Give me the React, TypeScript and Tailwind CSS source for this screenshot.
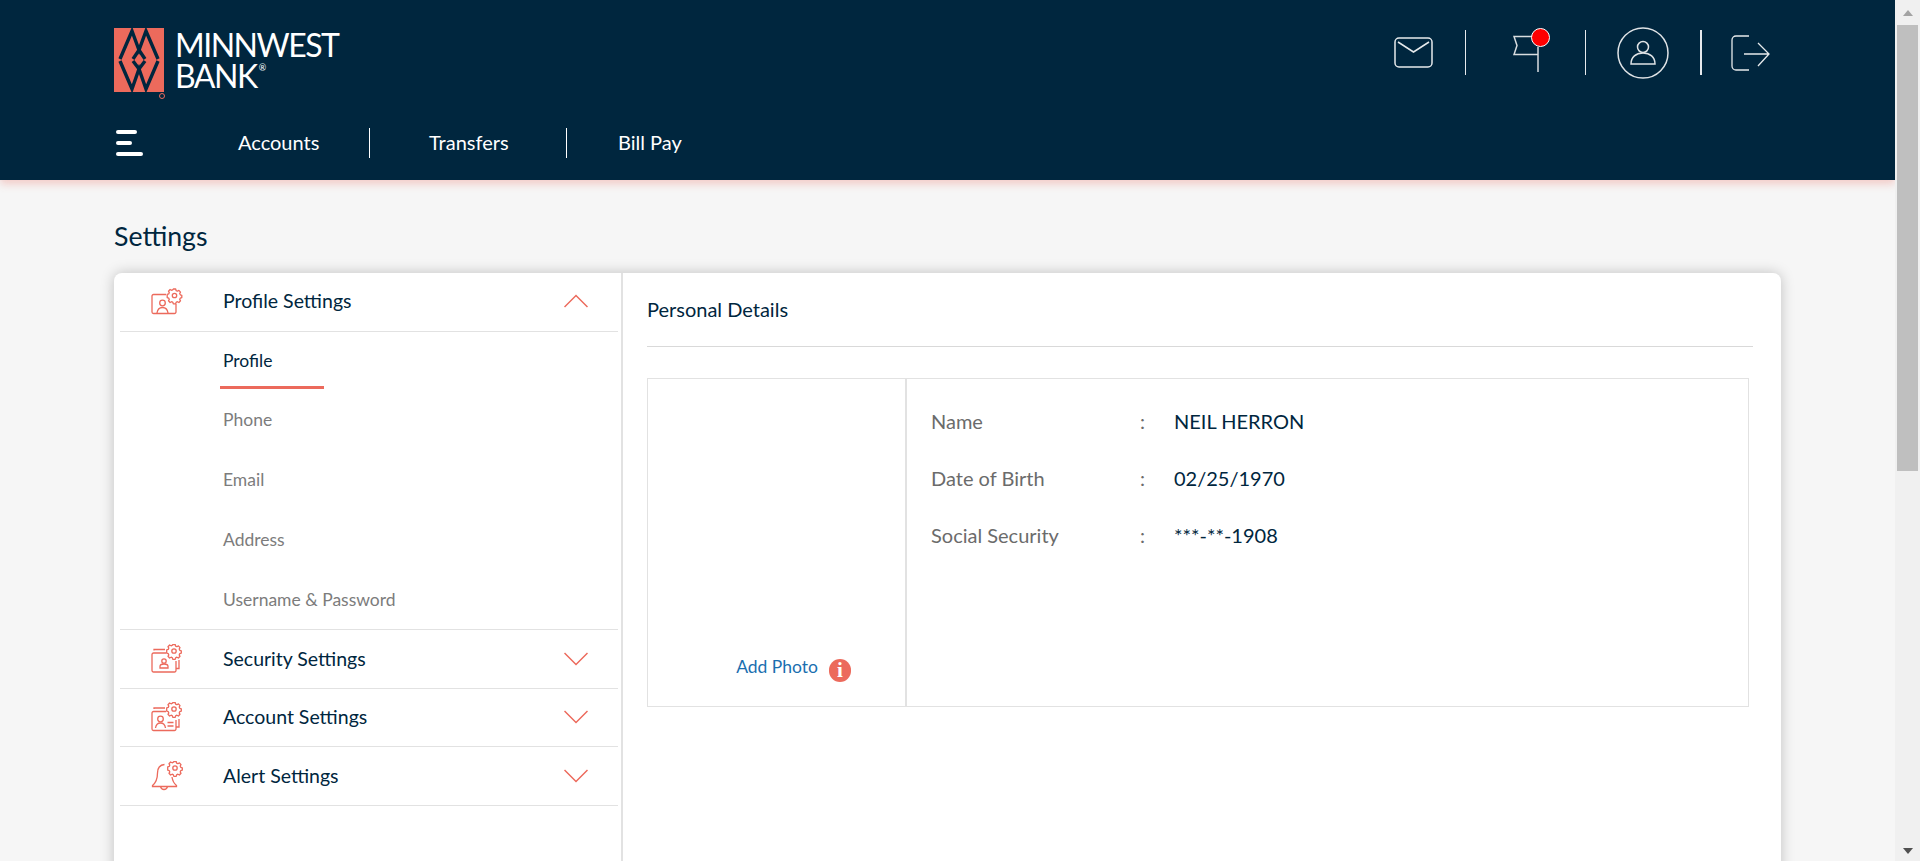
import React from 'react';

const coral = '#ec6a5c';

const GearBadge = ({ x, y }: { x: number; y: number }) => (
  <g transform={`translate(${x} ${y})`}>
    <circle r="2.2" fill="none" stroke={coral} strokeWidth="1.300" />
    <path
      d="M-1.2-6.5h2.4l.4 1.6 1.3.6 1.5-.8 1.6 1.7-.8 1.4.6 1.3 1.5.5v2.3l-1.5.5-.6 1.3.8 1.4-1.6 1.7-1.5-.8-1.3.6-.4 1.6h-2.4l-.4-1.6-1.3-.6-1.5.8-1.6-1.7.8-1.4-.6-1.3-1.5-.5V-1.1l1.5-.5.6-1.3-.8-1.4 1.6-1.7 1.500.8 1.300-.6z"
      fill="none"
      stroke={coral}
      strokeWidth="1.300"
      strokeLinejoin="round"
    />
  </g>
);

const ProfileIcon = () => (
  <svg width="32" height="28" viewBox="0 0 32 28" fill="none" stroke={coral} strokeWidth="1.300">
    <path d="M15 6.500H2.500a1.500 1.500 0 0 0-1.500 1.500v16a1.500 1.500 0 0 0 1.500 1.500h21a1.500 1.500 0 0 0 1.500-1.500v-8" />
    <circle cx="11.500" cy="15" r="2.800" />
    <path d="M6 25c.5-3.500 2.500-5.500 5.500-5.500s5 2 5.500 5.500" />
    <GearBadge x={23.500} y={7.500} />
  </svg>
);

const SecurityIcon = () => (
  <svg width="32" height="30" viewBox="0 0 32 30" fill="none" stroke={coral} strokeWidth="1.300">
    <path d="M3 6.500V5.500h11" />
    <path d="M15 9H2.500A1.500 1.500 0 0 0 1 10.500v16A1.500 1.500 0 0 0 2.500 28h21a1.500 1.500 0 0 0 1.500-1.500V17" />
    <path d="M25 24.500h3V16" />
    <circle cx="13" cy="17" r="2.200" />
    <path d="M9 24v-1.500c0-1.500 1.500-2.500 4-2.500s4 1 4 2.500V24z" />
    <GearBadge x={23} y={7} />
  </svg>
);

const AccountIcon = () => (
  <svg width="32" height="30" viewBox="0 0 32 30" fill="none" stroke={coral} strokeWidth="1.300">
    <path d="M3 7V6h11" />
    <path d="M15 9.500H2.500A1.500 1.500 0 0 0 1 11v16a1.500 1.500 0 0 0 1.500 1.500h21A1.500 1.500 0 0 0 25 27V18" />
    <path d="M25 25h3v-8" />
    <circle cx="9.500" cy="17" r="2.800" />
    <path d="M4.500 26c.5-3.500 2.500-5 5-5s4.500 1.500 5 5" />
    <path d="M16.500 20.500h6M16.500 24h6" />
    <GearBadge x={23} y={7} />
  </svg>
);

const AlertIcon = () => (
  <svg width="32" height="30" viewBox="0 0 32 30" fill="none" stroke={coral} strokeWidth="1.300">
    <path d="M13.500 3.500C8.500 4 6.500 8 6.500 12c0 6-2 10-5 12.500v1h24v-1c-2.500-2-4-5-4.500-8.500" />
    <path d="M9.500 25.500c.5 2 1.800 3 3.500 3s3-1 3.500-3" />
    <GearBadge x={24} y={7} />
  </svg>
);

const Chevron = ({ up }: { up?: boolean }) => (
  <svg width="24" height="14" viewBox="0 0 24 14" fill="none" stroke={coral} strokeWidth="1.500">
    <path d={up ? 'M.5 13 12 1.500 23.500 13' : 'M.5 1 12 12.500 23.500 1'} />
  </svg>
);

const Logo = () => (
  <div className="flex items-start">
    <div className="relative h-[64px] w-[50px] bg-[#ec6a5c]">
      <svg width="50" height="64" viewBox="0 0 50 64" fill="none" stroke="#00263e" strokeWidth="3.400">
        <path d="M6 31 18 3l7 19 7-19 12 28" />
        <path d="M19 31l6-9 6 9" />
        <path d="M6 33l12 28 7-20 7 20 12-28" />
        <path d="M19 33l6 8 6-8" />
      </svg>
      <span className="absolute bottom-[-7px] right-[-1px] h-[6px] w-[6px] rounded-full border border-[#ec6a5c]" />
    </div>
    <div className="ml-[11px] mt-[1px] font-['Lato',sans-serif] text-[32px] font-normal leading-[31px] tracking-[-1.5px] text-white">
      <div>MINNWEST</div>
      <div className="flex items-start">
        BANK<span className="ml-[2px] text-[9px] leading-[16px]">®</span>
      </div>
    </div>
  </div>
);

const HeaderDivider = () => <div className="h-[45px] w-px bg-white/90" />;

const TopIcons = () => (
  <div className="mt-[27px] flex h-[51px] items-center self-start">
    <svg width="39" height="31" viewBox="0 0 39 31" fill="none" stroke="#e6eaec" strokeWidth="1.500">
      <rect x="1" y="1" width="37" height="29" rx="4" />
      <path d="M4 5l15.500 10L35 5" />
    </svg>
    <div className="ml-[32px]">
      <HeaderDivider />
    </div>
    <div className="relative ml-[47px] h-[45px] w-[36px]">
      <svg width="36" height="45" viewBox="0 0 36 45" fill="none" stroke="#d8dde0" strokeWidth="1.500">
        <path d="M20 6.500H1l3 9-3 9h24" />
        <path d="M25 17v25" />
      </svg>
      <span className="absolute left-[18px] top-[-2px] h-[19px] w-[19px] rounded-full border border-white bg-[#ff0000]" />
    </div>
    <div className="ml-[36px]">
      <HeaderDivider />
    </div>
    <svg className="ml-[31px]" width="52" height="52" viewBox="0 0 52 52" fill="none" stroke="#dfe3e6" strokeWidth="1.500">
      <circle cx="26" cy="26" r="25" />
      <circle cx="26" cy="20" r="5.500" />
      <path d="M14 37c0-7 5-11 12-11s12 4 12 11z" />
    </svg>
    <div className="ml-[31px]">
      <div className="h-[45px] w-[2px] bg-white/90" />
    </div>
    <svg className="ml-[29px]" width="39" height="36" viewBox="0 0 39 36" fill="none" stroke="#e6eaec" strokeWidth="1.300">
      <path d="M18 1H5a4 4 0 0 0-4 4v26a4 4 0 0 0 4 4h13" />
      <path d="M13 19h25M27 8l11 11-11 12" />
    </svg>
  </div>
);

const subItems = ['Phone', 'Email', 'Address', 'Username & Password'];

const AccordionRow = ({ icon, label }: { icon: React.ReactNode; label: string }) => (
  <div className="ml-[6px] mr-[3px] flex h-[58.5px] items-center border-b border-[#e2e2e2] pr-[30px]">
    <div className="ml-[31px] flex w-[72px] justify-start">{icon}</div>
    <span className="flex-1 pb-[1px] text-[19.500px] text-[#00263e]">{label}</span>
    <Chevron />
  </div>
);

const DetailRow = ({ label, value }: { label: string; value: string }) => (
  <div className="flex h-[57px] items-center text-[20px]">
    <span className="w-[209px] text-[#6b6b6b]">{label}</span>
    <span className="w-[34px] text-[#6b6b6b]">:</span>
    <span className="text-[#00263e]">{value}</span>
  </div>
);

export default function App() {
  return (
    <div className="flex h-screen overflow-hidden bg-[#f6f6f6] font-['Lato',sans-serif]">
      <div className="min-w-0 flex-1 overflow-hidden">
        <header className="relative h-[180px] bg-[#00263e] px-[114px] shadow-[0_4px_8px_rgba(236,106,92,0.3)]">
          <div className="flex justify-between pr-[11px]">
            <div className="pt-[28px]">
              <Logo />
            </div>
            <TopIcons />
          </div>
          <nav className="mt-[35px] flex items-center text-[20px] text-white">
            <div className="flex w-[124px] flex-col gap-[7px] pl-[2px]">
              <div className="h-[4px] w-[21px] rounded-sm bg-white" />
              <div className="h-[4px] w-[16px] rounded-sm bg-white" />
              <div className="h-[4px] w-[27px] rounded-sm bg-white" />
            </div>
            <span className="mb-[2px] w-[82px]">Accounts</span>
            <div className="ml-[49px] mr-[59px] h-[30px] w-px bg-white" />
            <span className="mb-[2px] w-[78px]">Transfers</span>
            <div className="ml-[59px] mr-[51px] h-[30px] w-px bg-white" />
            <span className="mb-[2px]">Bill Pay</span>
          </nav>
        </header>

        <main className="px-[114px] pt-[40px]">
          <h1 className="text-[26.700px] leading-[32px] text-[#00263e]">Settings</h1>
          <div className="mt-[21px] flex h-[700px] rounded-lg bg-white shadow-[0_0_14px_rgba(0,0,0,0.22)]">
            <aside className="w-[509px] shrink-0 border-r-2 border-[#e2e2e2]">
              <div className="ml-[6px] mr-[3px] flex h-[59px] items-center border-b border-[#e2e2e2] pr-[30px]">
                <div className="ml-[31px] flex w-[72px] justify-start">
                  <ProfileIcon />
                </div>
                <span className="flex-1 pb-[2px] text-[19.500px] text-[#00263e]">Profile Settings</span>
                <div className="mb-[2px]">
                  <Chevron up />
                </div>
              </div>
              <div className="ml-[6px] mr-[3px] border-b border-[#e2e2e2] pt-[1px]">
                <div className="ml-[100px] w-[104px] border-b-[3px] border-[#ec6a5c] pb-[15px] pl-[3px] pt-[17px] text-[17.500px] leading-[21px] text-[#00263e]">
                  Profile
                </div>
                {subItems.map((item) => (
                  <div key={item} className="ml-[103px] flex h-[60px] items-center pt-[2px] text-[17.500px] text-[#7c7c7c]">
                    {item}
                  </div>
                ))}
              </div>
              <AccordionRow icon={<SecurityIcon />} label="Security Settings" />
              <AccordionRow icon={<AccountIcon />} label="Account Settings" />
              <AccordionRow icon={<AlertIcon />} label="Alert Settings" />
            </aside>

            <section className="min-w-0 flex-1 pl-[24px] pr-[28px]">
              <h2 className="flex h-[73px] items-center pb-[2px] text-[20px] leading-[24px] text-[#00263e]">Personal Details</h2>
              <div className="border-t border-[#d9d9d9] pt-[31px]">
                <div className="mr-[4px] flex h-[329px] border border-[#e2e2e2]">
                  <div className="flex w-[259px] shrink-0 items-end justify-end gap-[11px] border-r-2 border-[#e2e2e2] pb-[24px] pr-[54px]">
                    <span className="mb-[3px] text-[17.500px] leading-[24px] text-[#1a6fb0]">Add Photo</span>
                    <span className="flex h-[23px] w-[22px] items-center justify-center rounded-full bg-[#ec6a5c] font-['Liberation_Serif',serif] text-[21px] font-bold leading-none text-white">
                      i
                    </span>
                  </div>
                  <div className="flex-1 px-[24px] pt-[13px]">
                    <DetailRow label="Name" value="NEIL HERRON" />
                    <DetailRow label="Date of Birth" value="02/25/1970" />
                    <DetailRow label="Social Security" value="***-**-1908" />
                  </div>
                </div>
              </div>
            </section>
          </div>
        </main>
      </div>

      <div className="flex w-[25px] shrink-0 flex-col items-center bg-[#f0f0f0]">
        <div className="flex h-[25px] items-center justify-center">
          <div className="h-0 w-0 border-x-[5.500px] border-b-[6px] border-x-transparent border-b-[#a3a3a3]" />
        </div>
        <div className="h-[446px] w-[21px] bg-[#bfbfbf]" />
        <div className="flex-1" />
        <div className="flex h-[25px] items-center justify-center pt-[4px]">
          <div className="h-0 w-0 border-x-[5.500px] border-t-[6px] border-x-transparent border-t-[#505050]" />
        </div>
      </div>
    </div>
  );
}
